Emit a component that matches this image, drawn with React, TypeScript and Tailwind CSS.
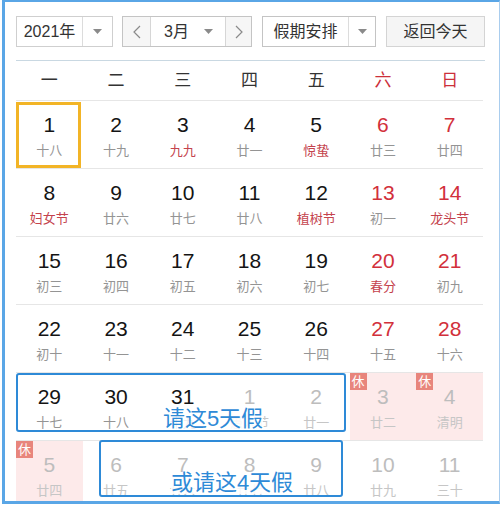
const FONT = { fontFamily: '"Liberation Sans", "Noto Sans CJK SC", sans-serif' };

type Day = {
  d: number;
  l: string;
  red?: boolean; // weekend number
  fest?: boolean; // festival lunar text
  fade?: boolean; // next month
  rest?: boolean; // 休
  today?: boolean;
};

const rows: Day[][] = [
  [
    { d: 1, l: "十八", today: true },
    { d: 2, l: "十九" },
    { d: 3, l: "九九", fest: true },
    { d: 4, l: "廿一" },
    { d: 5, l: "惊蛰", fest: true },
    { d: 6, l: "廿三", red: true },
    { d: 7, l: "廿四", red: true },
  ],
  [
    { d: 8, l: "妇女节", fest: true },
    { d: 9, l: "廿六" },
    { d: 10, l: "廿七" },
    { d: 11, l: "廿八" },
    { d: 12, l: "植树节", fest: true },
    { d: 13, l: "初一", red: true },
    { d: 14, l: "龙头节", red: true, fest: true },
  ],
  [
    { d: 15, l: "初三" },
    { d: 16, l: "初四" },
    { d: 17, l: "初五" },
    { d: 18, l: "初六" },
    { d: 19, l: "初七" },
    { d: 20, l: "春分", red: true, fest: true },
    { d: 21, l: "初九", red: true },
  ],
  [
    { d: 22, l: "初十" },
    { d: 23, l: "十一" },
    { d: 24, l: "十二" },
    { d: 25, l: "十三" },
    { d: 26, l: "十四" },
    { d: 27, l: "十五", red: true },
    { d: 28, l: "十六", red: true },
  ],
  [
    { d: 29, l: "十七" },
    { d: 30, l: "十八" },
    { d: 31, l: "十九" },
    { d: 1, l: "愚人节", fade: true },
    { d: 2, l: "廿一", fade: true },
    { d: 3, l: "廿二", fade: true, rest: true },
    { d: 4, l: "清明", fade: true, rest: true },
  ],
  [
    { d: 5, l: "廿四", fade: true, rest: true },
    { d: 6, l: "廿五", fade: true },
    { d: 7, l: "廿六", fade: true },
    { d: 8, l: "廿七", fade: true },
    { d: 9, l: "廿八", fade: true },
    { d: 10, l: "廿九", fade: true },
    { d: 11, l: "三十", fade: true },
  ],
];

function Caret() {
  return (
    <svg width="9" height="5" viewBox="0 0 9 5">
      <polygon points="0,0 9,0 4.5,5" fill="#8a8a8a" />
    </svg>
  );
}

function Chevron({ dir }: { dir: "l" | "r" }) {
  return (
    <svg width="8" height="14" viewBox="0 0 8 14">
      <polyline
        points={dir === "l" ? "7,1 1,7 7,13" : "1,1 7,7 1,13"}
        fill="none"
        stroke="#8a8a8a"
        strokeWidth="1.2"
      />
    </svg>
  );
}

function Cell({ day }: { day: Day }) {
  let num = day.red ? "text-[#d2303b]" : "text-[#141414]";
  let lunar = day.fest ? "text-[#c4434d]" : "text-[#949494]";
  if (day.fade) {
    num = "text-[#bdbdbd]";
    lunar = day.fest ? "text-[#e2b4b7]" : "text-[#c6c6c6]";
  }
  return (
    <div
      className={`relative flex h-[67px] flex-col items-center pt-[12px] ${
        day.rest ? "bg-[#fdeaea]" : ""
      }`}
    >
      {day.today && (
        <div className="absolute left-0 top-[1px] h-[66px] w-[65px] border-[3px] border-[#f2b426]" />
      )}
      {day.rest && (
        <span className="absolute left-0 top-0 flex h-[17px] w-[17px] items-center justify-center bg-[#e8857c] text-[13px] leading-none text-white">
          休
        </span>
      )}
      <span className={`text-[21px] leading-[24px] ${num}`}>{day.d}</span>
      <span className={`mt-[5px] text-[13px] leading-[18px] ${lunar}`}>{day.l}</span>
    </div>
  );
}

export default function App() {
  return (
    <div className="h-[506px] w-[500px] overflow-hidden bg-white" style={FONT}>
      <div className="ml-[2px] h-[504px] w-[498px] overflow-hidden border-b-[3px] border-l-[3px] border-r border-t-2 border-[#5aa6e6] border-r-[#a9cdee] pl-[11px] pt-[14px]">
        {/* toolbar */}
        <div className="flex h-[31px] text-[16px] text-[#333]">
          <div className="flex w-[97px] border border-[#cfcfcf]">
            <div className="flex w-[66px] items-center justify-center border-r border-[#dcdcdc]">2021年</div>
            <div className="flex flex-1 items-center justify-center">
              <Caret />
            </div>
          </div>
          <div className="ml-[9px] flex w-[130px] border border-[#c4c4c4]">
            <div className="flex w-[28px] items-center justify-center border-r border-[#d6d6d6] bg-[#f6f6f6]">
              <Chevron dir="l" />
            </div>
            <div className="flex flex-1 items-center">
              <span className="ml-[13px]">3月</span>
              <span className="ml-[15px] flex">
                <Caret />
              </span>
            </div>
            <div className="flex w-[26px] items-center justify-center border-l border-[#d6d6d6] bg-[#f6f6f6]">
              <Chevron dir="r" />
            </div>
          </div>
          <div className="ml-[10px] flex w-[114px] border border-[#c4c4c4]">
            <div className="flex w-[86px] items-center justify-center border-r border-[#dcdcdc]">假期安排</div>
            <div className="flex flex-1 items-center justify-center">
              <Caret />
            </div>
          </div>
          <div className="ml-[10px] flex w-[99px] items-center justify-center border border-[#d4d4d4] bg-[#f5f5f5]">
            返回今天
          </div>
        </div>

        <div className="mt-[13px] h-px w-[469px] bg-[#c9d8e2]" />

        {/* weekday header */}
        <div className="grid h-[39px] w-[467px] grid-cols-7 text-[17px]">
          {["一", "二", "三", "四", "五", "六", "日"].map((w, i) => (
            <div
              key={w}
              className={`flex items-center justify-center ${i > 4 ? "text-[#cc2f3a]" : "text-[#333]"}`}
            >
              {w}
            </div>
          ))}
        </div>

        {/* days */}
        <div className="relative w-[467px]">
          {rows.map((r, i) => (
            <div key={i} className="grid grid-cols-7 border-t border-[#e6e6e6]">
              {r.map((d, j) => (
                <Cell key={j} day={d} />
              ))}
            </div>
          ))}

          {/* suggestion overlays */}
          <div className="absolute left-0 top-[273px] flex h-[59px] w-[330px] items-end justify-center rounded-[3px] border-2 border-[#2e8ad7]">
            <span className="ml-[64px] bg-white/85 text-[22px] leading-[22px] text-[#2e8ad7]">请这5天假</span>
          </div>
          <div className="absolute left-[83px] top-[340px] flex h-[57px] w-[244px] items-end justify-center rounded-[3px] border-2 border-[#2e8ad7]">
            <span className="mb-[1px] ml-[22px] bg-white/85 text-[22px] leading-[22px] text-[#2e8ad7]">或请这4天假</span>
          </div>
        </div>
      </div>
    </div>
  );
}
